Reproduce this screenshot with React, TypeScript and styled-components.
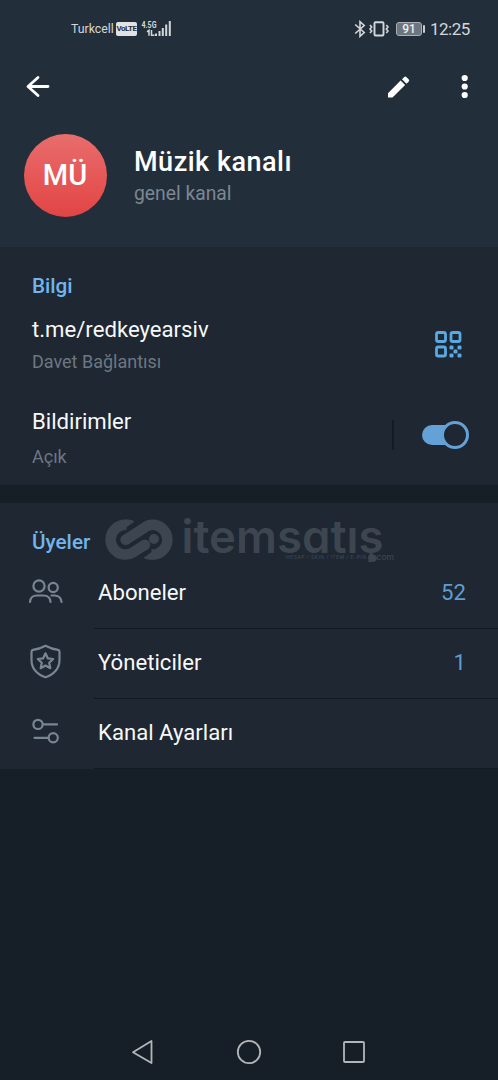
import React from "react";
import styled, { createGlobalStyle } from "styled-components";

const Global = createGlobalStyle`
  * { box-sizing: border-box; }
  body { margin: 0; background: #161e27; }
`;

const Screen = styled.main`
  width: 498px;
  height: 1080px;
  display: flex;
  flex-direction: column;
  background: #161e27;
  color: #fff;
  font-family: Roboto, "Liberation Sans", sans-serif;
  overflow: hidden;
`;

const Header = styled.header`
  height: 247px;
  flex: none;
  background: #232e3b;
`;

const StatusBar = styled.div`
  height: 58px;
  padding: 0 27px 0 71px;
  display: flex;
  align-items: center;
  justify-content: space-between;
  color: #d3d7da;
`;

const StatusGroup = styled.div`
  display: flex;
  align-items: center;
  height: 24px;
`;

const Carrier = styled.span`
  font-size: 12.3px;
  line-height: 24px;
  width: 45px;
  white-space: nowrap;
`;

const Clock = styled.span`
  font-size: 17px;
  line-height: 26px;
  margin-left: 5px;
  width: 41px;
  letter-spacing: -0.5px;
  white-space: nowrap;
`;

const VolteBadge = styled.span`
  width: 21px;
  height: 14px;
  border-radius: 2px;
  background: #e0e3e6;
  color: #232e3b;
  font: 700 8px/14px Roboto, sans-serif;
  letter-spacing: -0.5px;
  text-align: center;
`;

const SignalSlot = styled.div`
  display: flex;
  margin-left: 4px;
`;

const VibrateSlot = styled.div`
  display: flex;
  margin-left: 3px;
`;

const Battery = styled.span`
  width: 26px;
  height: 14px;
  margin-left: 7px;
  border: 1px solid #a9afb5;
  border-radius: 3px;
  background: #6d757e;
  color: #eceef0;
  font: 500 12px/12px Roboto, sans-serif;
  text-align: center;
`;

const BatteryTip = styled.span`
  width: 2px;
  height: 8px;
  margin-left: 1px;
  border-radius: 1px;
  background: #c8cdd1;
`;

const Toolbar = styled.div`
  height: 57px;
  padding: 0 17px 0 22px;
  display: flex;
  align-items: center;
`;

const IconButton = styled.button<{ $gap?: number }>`
  width: 32px;
  height: 32px;
  margin: 0 0 0 ${(p) => p.$gap ?? 0}px;
  padding: 0;
  border: 0;
  background: none;
  color: #fff;
  display: flex;
  align-items: center;
  justify-content: center;
`;

const Spacer = styled.div`
  flex: 1;
`;

const Profile = styled.div`
  padding: 18.5px 0 0 23.5px;
  display: flex;
  gap: 27.5px;
`;

const Avatar = styled.div`
  width: 83px;
  height: 83px;
  border-radius: 50%;
  background: linear-gradient(#e86e6c, #e24444);
  font-weight: 500;
  font-size: 29px;
  line-height: 83px;
  text-align: center;
`;

const ProfileText = styled.div`
  padding-top: 10.4px;
`;

const Title = styled.h1`
  margin: 0;
  font-weight: 500;
  font-size: 27px;
  line-height: 36px;
  letter-spacing: 0.5px;
`;

const Subtitle = styled.div`
  font-size: 19.3px;
  line-height: 27px;
  color: #7b8793;
`;

const Section = styled.section<{ $height: number; $top: number }>`
  flex: none;
  height: ${(p) => p.$height}px;
  padding-top: ${(p) => p.$top}px;
  background: #1e2732;
`;

const SectionTitle = styled.h2`
  margin: 0 0 0 32px;
  width: 60px;
  font-weight: 500;
  font-size: 20.7px;
  line-height: 26px;
  color: #71b5ec;
`;

const InfoRow = styled.div<{ $top: number; $gap: number }>`
  margin-top: ${(p) => p.$top}px;
  padding: 0 29px 0 32px;
  display: flex;
  align-items: center;
  justify-content: space-between;
  & > div:first-child > span:last-child { margin-top: ${(p) => p.$gap}px; }
`;

const Primary = styled.span`
  display: block;
  font-size: 22.15px;
  line-height: 30px;
  color: #f7f8f9;
`;

const Secondary = styled.span`
  display: block;
  font-size: 18px;
  line-height: 24px;
  color: #6d7782;
`;

const QrSlot = styled.div`
  margin: 2px 7px 0 0;
  display: flex;
`;

const SwitchArea = styled.div`
  height: 30px;
  margin-top: -4px;
  padding-left: 28px;
  border-left: 2px solid #141b22;
  display: flex;
  align-items: center;
`;

const Track = styled.div`
  width: 47px;
  height: 28px;
  display: flex;
  align-items: center;
  &::before {
    content: "";
    width: 37px;
    height: 20px;
    border-radius: 10px;
    background: #64a1d6;
  }
`;

const Knob = styled.div`
  flex: none;
  width: 28px;
  height: 28px;
  margin-left: -18px;
  border: 3px solid #64a1d6;
  border-radius: 50%;
  background: #1e2732;
`;

const Divider = styled.div`
  flex: none;
  height: 18px;
  background: #161e26;
`;

const MembersHead = styled.div`
  height: 56px;
  padding-top: 16px;
  display: flex;
  align-items: flex-start;
  & > h2 { margin-top: 10px; }
`;

const Brand = styled.div`
  margin-left: 13px;
  width: 300px;
  height: 40px;
  color: #3d4650;
  & > svg { overflow: visible; }
`;

const MenuRow = styled.div`
  height: 70px;
  padding-left: 26px;
  display: flex;
`;

const RowIcon = styled.div`
  width: 40px;
  margin-right: 28px;
  padding-bottom: 2px;
  display: flex;
  align-items: center;
  color: #788592;
`;

const RowBody = styled.div`
  flex: 1;
  padding: 0 32px 4px 4px;
  border-bottom: 1px solid #121920;
  display: flex;
  align-items: center;
  justify-content: space-between;
`;

const Count = styled.span`
  font-size: 22.15px;
  line-height: 30px;
  color: #5f9dd0;
`;

const NavBar = styled.nav`
  margin-top: auto;
  height: 56px;
  padding: 0 132px 0 131px;
  display: flex;
  align-items: center;
  justify-content: space-between;
`;

const Signal = () => (
  <svg width="31" height="20" viewBox="0 0 31 20" fill="#d3d7da">
    <text x="0.500" y="8.500" fontFamily="Roboto" fontWeight="700" fontSize="8.500" textLength="15" lengthAdjust="spacingAndGlyphs">4.5G</text>
    <path d="M6 12.800 8 11.300v5.500M10.500 11v5.200h3" fill="none" stroke="#d3d7da" strokeWidth="1.500" />
    <path d="M14 14.500h2v2.500h-2zM17.500 12h2v5h-2zM20.800 9h2v8h-2zM24.200 5.500h2v11.500h-2zM27.800 2h2v15h-2z" />
  </svg>
);

const Bluetooth = () => (
  <svg width="12" height="18" viewBox="0 0 12 18" fill="none" stroke="#d3d7da" strokeWidth="1.600">
    <path d="m1.200 4.500 9 8L6 16.300V1.700l4.200 3.800-9 8" />
  </svg>
);

const Vibrate = () => (
  <svg width="20" height="18" viewBox="0 0 20 18" fill="none" stroke="#d3d7da">
    <rect x="5.500" y="2.300" width="9" height="13.200" rx="1" strokeWidth="1.900" />
    <path d="m1 5 1.700 2L1 9l1.700 2L1 13M17.300 5 19 7l-1.700 2 1.700 2-1.700 2" strokeWidth="1.600" />
  </svg>
);

const BackArrow = () => (
  <svg width="32" height="32" viewBox="0 0 32 32" fill="none" stroke="#fff" strokeWidth="2.800" strokeLinecap="round" strokeLinejoin="round">
    <path d="M26 15.500H6.500M16 6.500l-10 9 10 9" />
  </svg>
);

const Pencil = () => (
  <svg width="32" height="32" viewBox="0 0 32 32" fill="#fff">
    <path d="M5 26.500v-4.300L17.600 9.600l4.500 4.500L9.500 26.500zM19 8.200l2.300-2.300q1-.9 2 0l2.500 2.500q.9 1 0 2l-2.300 2.300z" />
  </svg>
);

const Dots = () => (
  <svg width="32" height="32" viewBox="0 0 32 32" fill="#fff">
    <circle cx="15.700" cy="7" r="3.100" /><circle cx="15.700" cy="15.500" r="3.100" /><circle cx="15.700" cy="24" r="3.100" />
  </svg>
);

const Qr = () => (
  <svg width="27" height="27" viewBox="0 0 27 27" fill="none" stroke="#59a9e2" strokeWidth="2.800">
    <rect x="1.500" y="1.500" width="9" height="9" rx="1.800" />
    <rect x="16" y="1.500" width="9" height="9" rx="1.800" />
    <rect x="1.500" y="16" width="9" height="9" rx="1.800" />
    <g fill="#59a9e2" stroke="none">
      <rect x="14.500" y="14.500" width="4" height="4" rx="1.300" /><rect x="22.500" y="14.500" width="4" height="4" rx="1.300" />
      <rect x="18.500" y="18.500" width="4" height="4" rx="1.300" /><rect x="14.500" y="22.500" width="4" height="4" rx="1.300" />
      <rect x="22.500" y="22.500" width="4" height="4" rx="1.300" />
    </g>
  </svg>
);

const BrandMark = () => (
  <svg width="300" height="46" viewBox="0 0 300 46" fill="currentColor">
    <g fill="none" stroke="currentColor" strokeWidth="10.500">
      <path d="M21.500 5.800h-1a14.900 14.900 0 0 0 0 29.800q4 0 7.500-2.300L40 25.700" />
      <path d="M20.600 20.800 40 8.300q3.500-2.500 7.500-2.500a14.900 14.900 0 0 1 0 29.800h-1" />
    </g>
    <circle cx="40" cy="25.700" r="5.250" />
    <circle cx="20.600" cy="20.800" r="5.250" />
    <path d="M20 .55h3q4 0 6.500 2L17 11.500zM48 40.850h-3q-4 0-6.500-2L51 29.900z" />
    <circle cx="49" cy="20" r="5" />
    <text x="76.500" y="34" fontFamily="Inter" fontWeight="600" fontSize="46" textLength="202" lengthAdjust="spacingAndGlyphs" style={{ fontFeatureSettings: '"cv11", "ss03"' }}>itemsatış</text>
    <circle cx="266.700" cy="38.500" r="3.600" />
    <text x="181" y="40" fontFamily="Inter" fontWeight="500" fontSize="5" textLength="80">HESAP / SKIN / ITEM / E-PIN</text>
    <text x="271.500" y="40.500" fontFamily="Inter" fontWeight="500" fontSize="8" textLength="17.500" lengthAdjust="spacingAndGlyphs">com</text>
  </svg>
);

const People = () => (
  <svg width="40" height="40" viewBox="0 0 40 40" fill="none" stroke="currentColor" strokeWidth="2.200" strokeLinecap="round">
    <circle cx="13" cy="13" r="5.600" /><circle cx="27.200" cy="14.500" r="4.600" />
    <path d="M4 29q.5-6.500 7-6.500h6.500q6.500 0 7 6.500M25.500 22.500h3.500q6 .5 6.500 6.500" />
  </svg>
);

const Shield = () => (
  <svg width="40" height="40" viewBox="0 0 40 40" fill="none" stroke="currentColor" strokeWidth="2.200" strokeLinejoin="round">
    <path d="M19.500 2.800q6.500 3.500 12.500 4.100 1.500.4 1.500 2v8q0 12-14 17.400-14-5.400-14-17.400v-8q0-1.600 1.500-2 6-.6 12.500-4.100Z" />
    <path d="m19.500 10.300 2.300 5 5.400.7-4 3.800 1.100 5.400-4.800-2.700-4.800 2.700 1.100-5.400-4-3.800 5.400-.7z" />
  </svg>
);

const Sliders = () => (
  <svg width="40" height="40" viewBox="0 0 40 40" fill="none" stroke="currentColor" strokeWidth="2.200" strokeLinecap="round">
    <circle cx="12" cy="11.400" r="4.600" /><circle cx="27.200" cy="24.800" r="4.600" />
    <path d="M17 11.400h14M8.500 24.800h14" />
  </svg>
);

const rows = [
  { label: "Aboneler", count: "52", icon: <People /> },
  { label: "Yöneticiler", count: "1", icon: <Shield /> },
  { label: "Kanal Ayarları", count: "", icon: <Sliders /> },
];

export default function App() {
  return (
    <Screen>
      <Global />
      <Header>
        <StatusBar>
          <StatusGroup>
            <Carrier>Turkcell</Carrier>
            <VolteBadge>VoLTE</VolteBadge>
            <SignalSlot><Signal /></SignalSlot>
          </StatusGroup>
          <StatusGroup>
            <Bluetooth />
            <VibrateSlot><Vibrate /></VibrateSlot>
            <Battery>91</Battery>
            <BatteryTip />
            <Clock>12:25</Clock>
          </StatusGroup>
        </StatusBar>
        <Toolbar>
          <IconButton aria-label="Geri"><BackArrow /></IconButton>
          <Spacer />
          <IconButton aria-label="Düzenle"><Pencil /></IconButton>
          <IconButton aria-label="Menü" $gap={34}><Dots /></IconButton>
        </Toolbar>
        <Profile>
          <Avatar>MÜ</Avatar>
          <ProfileText>
            <Title>Müzik kanalı</Title>
            <Subtitle>genel kanal</Subtitle>
          </ProfileText>
        </Profile>
      </Header>
      <Section $height={238} $top={26}>
        <SectionTitle>Bilgi</SectionTitle>
        <InfoRow $top={15} $gap={5.5}>
          <div>
            <Primary>t.me/redkeyearsiv</Primary>
            <Secondary>Davet Bağlantısı</Secondary>
          </div>
          <QrSlot><Qr /></QrSlot>
        </InfoRow>
        <InfoRow $top={32} $gap={9.5}>
          <div>
            <Primary>Bildirimler</Primary>
            <Secondary>Açık</Secondary>
          </div>
          <SwitchArea><Track><Knob /></Track></SwitchArea>
        </InfoRow>
      </Section>
      <Divider />
      <Section $height={266} $top={0}>
        <MembersHead>
          <SectionTitle>Üyeler</SectionTitle>
          <Brand><BrandMark /></Brand>
        </MembersHead>
        {rows.map((row) => (
          <MenuRow key={row.label}>
            <RowIcon>{row.icon}</RowIcon>
            <RowBody>
              <Primary>{row.label}</Primary>
              <Count>{row.count}</Count>
            </RowBody>
          </MenuRow>
        ))}
      </Section>
      <NavBar>
        <svg width="24" height="26" viewBox="0 0 24 26" fill="none" stroke="#b3b6b8" strokeWidth="1.800" strokeLinejoin="round"><path d="M20.500 2v22L2 13.200z" /></svg>
        <svg width="26" height="26" viewBox="0 0 26 26" fill="none" stroke="#b3b6b8" strokeWidth="1.800"><circle cx="13" cy="13" r="11.200" /></svg>
        <svg width="24" height="26" viewBox="0 0 24 26" fill="none" stroke="#b3b6b8" strokeWidth="1.800"><rect x="2" y="3" width="20" height="20" rx="1" /></svg>
      </NavBar>
    </Screen>
  );
}
